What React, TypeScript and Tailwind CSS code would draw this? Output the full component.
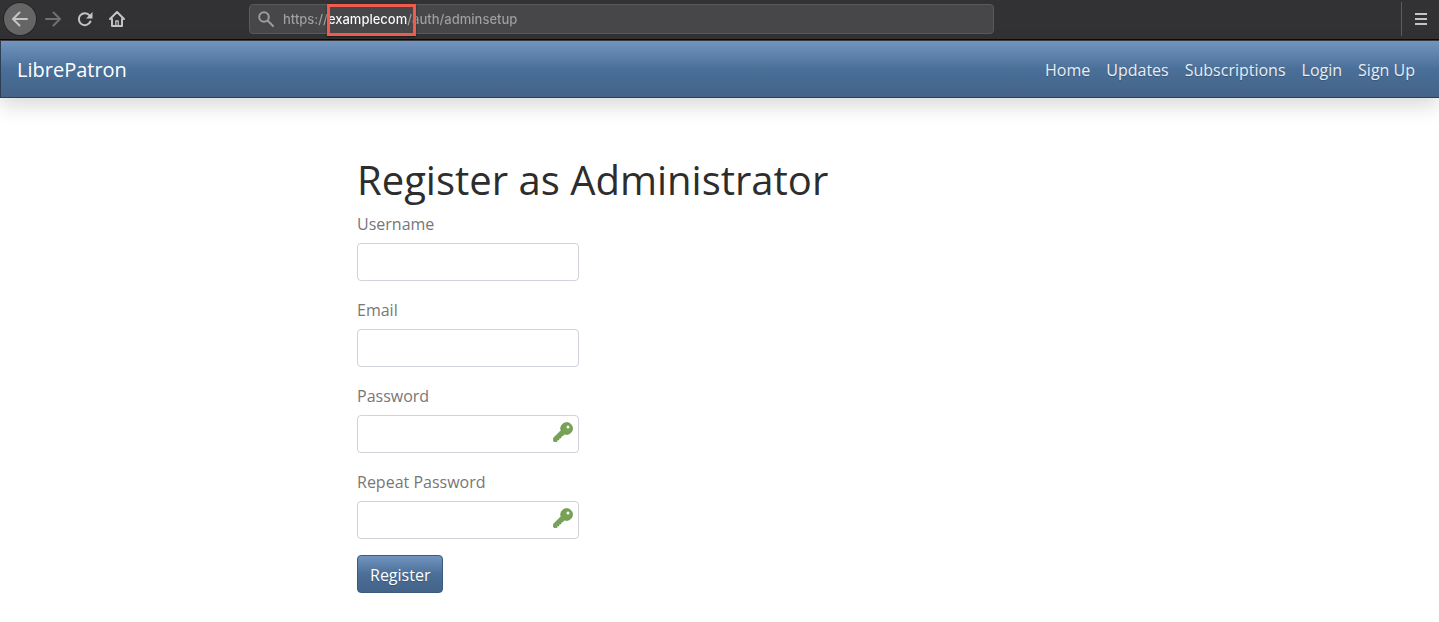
import { useState } from "react";

const navLinks = ["Home", "Updates", "Subscriptions", "Login", "Sign Up"];

function BackIcon() {
  return (
    <svg viewBox="0 0 16 16" className="size-4" fill="none" stroke="currentColor" strokeWidth="2" strokeLinecap="round" strokeLinejoin="round" aria-hidden="true">
      <path d="M15 8H1.5M7.5 1.5 1 8l6.5 6.5" />
    </svg>
  );
}

function ForwardIcon() {
  return (
    <svg viewBox="0 0 16 16" className="size-4" fill="none" stroke="currentColor" strokeWidth="2" strokeLinecap="round" strokeLinejoin="round" aria-hidden="true">
      <path d="M1 8h13.5M8.5 1.5 15 8l-6.5 6.5" />
    </svg>
  );
}

function ReloadIcon() {
  return (
    <svg viewBox="0 0 16 16" className="size-4" fill="none" stroke="currentColor" strokeWidth="2" strokeLinecap="round" aria-hidden="true">
      <path d="M12.6 4.5A6 6 0 1 0 13.4 10.5" />
      <path d="M15.5 1v6.5H9z" fill="currentColor" stroke="none" />
    </svg>
  );
}

function HomeIcon() {
  return (
    <svg viewBox="0 0 16 16" className="size-4" fill="none" stroke="currentColor" strokeWidth="2" strokeLinecap="round" strokeLinejoin="round" aria-hidden="true">
      <path d="M1 8 8 1l7 7M3 8v7h10V8" />
      <path d="M6.8 14.5V10h2.4v4.5" strokeWidth="1.3" />
    </svg>
  );
}

function SearchIcon() {
  return (
    <svg viewBox="0 0 16 16" className="size-4 shrink-0 text-[#9c9c9e]" fill="none" stroke="currentColor" strokeWidth="2" strokeLinecap="round" aria-hidden="true">
      <circle cx="6" cy="6" r="4.8" />
      <path d="m9.8 9.8 5.2 5.2" />
    </svg>
  );
}

function KeyIcon() {
  return (
    <svg viewBox="0 0 20 20" className="size-5" aria-hidden="true">
      <path
        fill="#76a354"
        stroke="#5c8a3c"
        strokeWidth=".6"
        d="M13.7.5a6 6 0 0 0-5.7 8L.5 16v3l.7.7h2.6l.4-1.9 1.7.1.2-2 1.8.1.2-2 1.6-.1 1.7-1.8A6 6 0 1 0 13.7.5Z"
      />
      <circle cx="15" cy="5" r="1.5" fill="#fff" />
    </svg>
  );
}

function BrowserBar() {
  const [url, setUrl] = useState("https://examplecom/auth/adminsetup");
  return (
    <div className="flex h-10 items-center border-b border-[#0c0c0d] bg-[#323234] pb-px text-[#c4c4c6]">
      <div className="flex w-[249px] shrink-0 items-center pl-1">
        <button type="button" aria-label="Back" className="flex size-8 items-center justify-center rounded-full bg-[#656565] ring-1 ring-[#262628]">
          <BackIcon />
        </button>
        <button type="button" aria-label="Forward" className="flex h-8 w-[34px] items-center justify-center text-[#707072]">
          <ForwardIcon />
        </button>
        <button type="button" aria-label="Reload" className="flex h-8 w-[30px] items-center justify-center">
          <ReloadIcon />
        </button>
        <button type="button" aria-label="Home page" className="flex h-8 w-[34px] items-center justify-center">
          <HomeIcon />
        </button>
      </div>
      <div className="relative flex h-[30px] w-[745px] min-w-0 items-center gap-2 rounded-sm border border-[#5a5a5c] bg-[#474749] pl-2">
        <SearchIcon />
        <input
          type="text"
          aria-label="Address"
          value={url}
          onChange={(e) => setUrl(e.target.value)}
          className="min-w-0 flex-1 bg-[linear-gradient(90deg,#a0a0a2_46px,#fff_46px,#fff_125px,#a0a0a2_125px)] bg-clip-text pt-0.5 pl-px font-['Inter',sans-serif] text-[13px] font-medium text-transparent caret-white outline-none"
        />
        <span className="pointer-events-none absolute -top-px left-[77px] h-8 w-[89px] border-3 border-[#ef5b4c] shadow-[0_1px_2px_rgba(0,0,0,0.5)]" />
      </div>
      <div className="ml-auto flex h-[34px] w-[38px] shrink-0 items-center justify-center border-l border-[#5c5c5e]">
        <button type="button" aria-label="Menu">
          <svg viewBox="0 0 12 12" className="size-3" fill="currentColor" aria-hidden="true">
            <path d="M0 0h12v2H0zM0 5h12v2H0zM0 10h12v2H0z" />
          </svg>
        </button>
      </div>
    </div>
  );
}

function SiteNav() {
  return (
    <nav className="flex h-[57px] items-center justify-between border-b border-l border-[#2d3f54] bg-[linear-gradient(#7295bf,#4a6f98_50%,#446389)] pt-0.5 pr-6 pl-4 shadow-[0_8px_20px_rgba(0,0,0,0.15)]">
      <a href="#" className="text-xl text-white">LibrePatron</a>
      <ul className="flex gap-4 text-base text-[#e8edf3] text-shadow-[0_1px_1px_rgba(0,0,0,0.2)]">
        {navLinks.map((label) => (
          <li key={label}>
            <a href="#">{label}</a>
          </li>
        ))}
      </ul>
    </nav>
  );
}

type FieldProps = { id: string; label: string; type: string };

function Field({ id, label, type }: FieldProps) {
  return (
    <div>
      <label htmlFor={id} className="mb-[7px] block text-[#777]">{label}</label>
      <div className="relative w-[222px]">
        <input id={id} name={id} type={type} className="block h-[38px] w-full rounded border border-[#ced4da] bg-white px-3 text-[#777]" />
        {type === "password" && (
          <span className="pointer-events-none absolute top-[7px] right-[6px]">
            <KeyIcon />
          </span>
        )}
      </div>
    </div>
  );
}

export default function App() {
  return (
    <div className="min-h-screen bg-white font-['Open_Sans',sans-serif] text-base">
      <header className="bg-[#3c3c3e]">
        <BrowserBar />
        <div className="pt-px">
          <SiteNav />
        </div>
      </header>
      <main className="mx-auto max-w-[725px] pt-[58px]">
        <h1 className="mb-2 text-[40px] leading-[48px] text-[#2d2d2d]">Register as Administrator</h1>
        <form onSubmit={(e) => e.preventDefault()}>
          <div className="mb-4 flex flex-col gap-[17px]">
            <Field id="username" label="Username" type="text" />
            <Field id="email" label="Email" type="text" />
            <Field id="password" label="Password" type="password" />
            <Field id="repeat-password" label="Repeat Password" type="password" />
          </div>
          <button
            type="submit"
            className="h-[38px] rounded border border-[#3a5a80] bg-[linear-gradient(#7295bf,#4a6f98_50%,#446389)] px-3 pt-0.5 text-white text-shadow-[0_1px_1px_rgba(0,0,0,0.2)]"
          >
            Register
          </button>
        </form>
      </main>
    </div>
  );
}
